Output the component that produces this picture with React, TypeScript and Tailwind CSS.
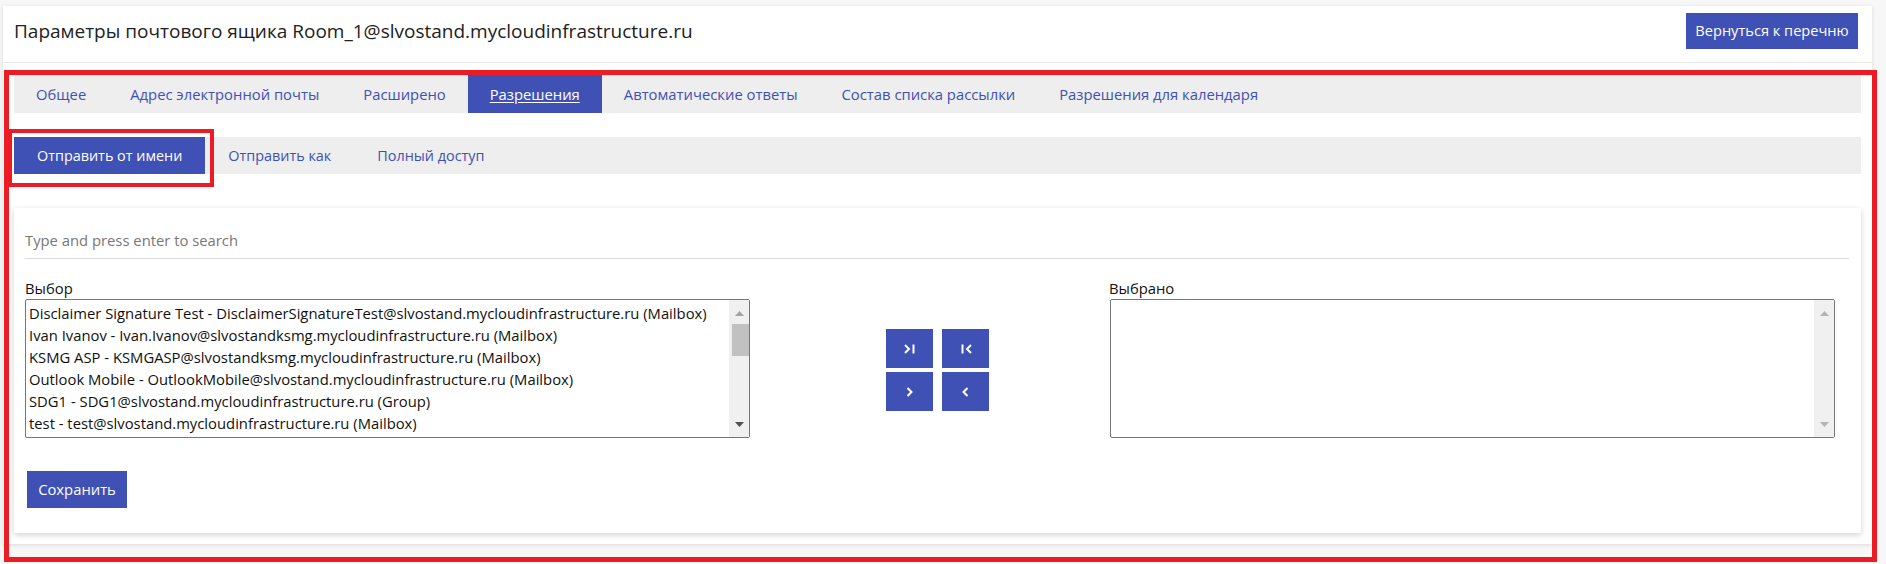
import React from "react";

const items = [
  "Disclaimer Signature Test - DisclaimerSignatureTest@slvostand.mycloudinfrastructure.ru (Mailbox)",
  "Ivan Ivanov - Ivan.Ivanov@slvostandksmg.mycloudinfrastructure.ru (Mailbox)",
  "KSMG ASP - KSMGASP@slvostandksmg.mycloudinfrastructure.ru (Mailbox)",
  "Outlook Mobile - OutlookMobile@slvostand.mycloudinfrastructure.ru (Mailbox)",
  "SDG1 - SDG1@slvostand.mycloudinfrastructure.ru (Group)",
  "test - test@slvostand.mycloudinfrastructure.ru (Mailbox)",
];

const tabs = [
  "Общее",
  "Адрес электронной почты",
  "Расширено",
  "Разрешения",
  "Автоматические ответы",
  "Состав списка рассылки",
  "Разрешения для календаря",
];

function Up({ color }: { color: string }) {
  return (
    <svg width="9" height="5" viewBox="0 0 9 5">
      <polygon points="0,5 4.5,0 9,5" fill={color} />
    </svg>
  );
}
function Down({ color }: { color: string }) {
  return (
    <svg width="9" height="5" viewBox="0 0 9 5">
      <polygon points="0,0 9,0 4.5,5" fill={color} />
    </svg>
  );
}

function Scrollbar({ thumb, upColor, downColor }: { thumb: boolean; upColor: string; downColor: string }) {
  return (
    <div className="absolute right-0 top-0 bottom-0 w-[20px] bg-[#f0f0f0] flex flex-col items-center">
      <div className="h-[24px] flex items-center justify-center pt-[2px]">
        <Up color={upColor} />
      </div>
      {thumb ? <div className="ml-[2px] w-[17px] h-[32px] bg-[#c1c1c1]" /> : null}
      <div className="flex-1" />
      <div className="h-[24px] flex items-center justify-center pb-[1px]">
        <Down color={downColor} />
      </div>
    </div>
  );
}

function Icon({ kind }: { kind: "last" | "first" | "next" | "prev" }) {
  if (kind === "last")
    return (
      <svg width="12" height="10" viewBox="0 0 12 10" fill="none" stroke="white" strokeWidth="2">
        <polyline points="1,1 5,5 1,9" />
        <line x1="9.5" y1="0.5" x2="9.5" y2="9.5" />
      </svg>
    );
  if (kind === "first")
    return (
      <svg width="12" height="10" viewBox="0 0 12 10" fill="none" stroke="white" strokeWidth="2">
        <line x1="2.5" y1="0.5" x2="2.5" y2="9.5" />
        <polyline points="11,1 7,5 11,9" />
      </svg>
    );
  if (kind === "next")
    return (
      <svg width="7" height="10" viewBox="0 0 7 10" fill="none" stroke="white" strokeWidth="2">
        <polyline points="1.5,1 5.5,5 1.5,9" />
      </svg>
    );
  return (
    <svg width="7" height="10" viewBox="0 0 7 10" fill="none" stroke="white" strokeWidth="2">
      <polyline points="5.5,1 1.5,5 5.5,9" />
    </svg>
  );
}

export default function App() {
  return (
    <div className="relative w-[1886px] h-[564px] bg-[#f7f7f7] overflow-hidden font-['Open_Sans',sans-serif] text-[#212121]">
      <div className="pt-[6px] pl-[3px]">
        <div className="w-[1869px] h-[538px] bg-white shadow-[0_1px_4px_rgba(0,0,0,0.12)]">
          {/* header */}
          <div className="h-[57px] pt-[7px] pl-[11px] pr-[14px] flex justify-between items-start border-b border-[#e6e6e6]">
            <div className="h-[36px] flex items-center text-[19px] text-[#212121]">
              Параметры почтового ящика Room_1@slvostand.mycloudinfrastructure.ru
            </div>
            <button className="h-[36px] w-[172px] bg-[#3f51b5] text-white text-[14.6px] flex items-center justify-center">
              Вернуться к перечню
            </button>
          </div>

          <div className="px-[11px] pt-[12px]">
            {/* tabs */}
            <div className="h-[38px] bg-[#eeeeee] flex text-[14.8px] text-[#3f51b5]">
              {tabs.map((t) =>
                t === "Разрешения" ? (
                  <div key={t} className="px-[22px] h-full flex items-center bg-[#3f51b5] text-white underline underline-offset-2">
                    {t}
                  </div>
                ) : (
                  <div key={t} className="px-[22px] h-full flex items-center">
                    {t}
                  </div>
                )
              )}
            </div>

            {/* sub tabs */}
            <div className="mt-[24px] h-[37px] bg-[#eeeeee] flex text-[14.4px] text-[#3f51b5]">
              <div className="px-[23px] h-full flex items-center bg-[#3f51b5] text-white">Отправить от имени</div>
              <div className="px-[23px] h-full flex items-center">Отправить как</div>
              <div className="px-[23px] h-full flex items-center">Полный доступ</div>
            </div>

            {/* card */}
            <div className="mt-[34px] h-[325px] bg-white shadow-[0_2px_6px_rgba(0,0,0,0.18)] pl-[11px] pr-[12px] pt-[17px]">
              <div className="h-[34px] border-b border-[#dcdcdc] flex items-center text-[14.8px] text-[#777777] pb-[2px]">
                Type and press enter to search
              </div>

              <div className="mt-[19px] flex">
                <div className="w-[725px]">
                  <div className="h-[21px] leading-[21px] text-[14.8px] text-[#111]">Выбор</div>
                  <div className="relative h-[139px] border border-[#767676] rounded-[2px] overflow-hidden">
                    <div className="pl-[3px] pt-[2px] text-[14.8px] leading-[22px] text-[#111]">
                      {items.map((i) => (
                        <div key={i} className="h-[22px] whitespace-nowrap">
                          {i}
                        </div>
                      ))}
                    </div>
                    <Scrollbar thumb upColor="#a3a3a3" downColor="#505050" />
                  </div>
                </div>

                <div className="w-[359px] pt-[51px] pl-[136px]">
                  <div className="grid grid-cols-[47px_47px] gap-x-[9px] gap-y-[4px]">
                    <button className="h-[39px] bg-[#3f51b5] flex items-center justify-center">
                      <Icon kind="last" />
                    </button>
                    <button className="h-[39px] bg-[#3f51b5] flex items-center justify-center">
                      <Icon kind="first" />
                    </button>
                    <button className="h-[39px] bg-[#3f51b5] flex items-center justify-center">
                      <Icon kind="next" />
                    </button>
                    <button className="h-[39px] bg-[#3f51b5] flex items-center justify-center">
                      <Icon kind="prev" />
                    </button>
                  </div>
                </div>

                <div className="w-[726px]">
                  <div className="h-[21px] leading-[21px] text-[14.8px] text-[#111]">Выбрано</div>
                  <div className="relative ml-[1px] h-[139px] border border-[#767676] rounded-[2px]">
                    <Scrollbar thumb={false} upColor="#b4b4b4" downColor="#b4b4b4" />
                  </div>
                </div>
              </div>

              <button className="mt-[33px] ml-[2px] w-[100px] h-[37px] bg-[#3f51b5] text-white text-[14.8px] flex items-center justify-center">
                Сохранить
              </button>
            </div>
          </div>
        </div>
      </div>

      {/* annotation frames */}
      <div className="absolute left-[4px] top-[70px] w-[1873px] h-[492px] border-[5px] border-[#ed1c24] pointer-events-none" />
      <div className="absolute left-[8px] top-[129px] w-[206px] h-[58px] border-[4px] border-[#ed1c24] pointer-events-none" />
    </div>
  );
}
